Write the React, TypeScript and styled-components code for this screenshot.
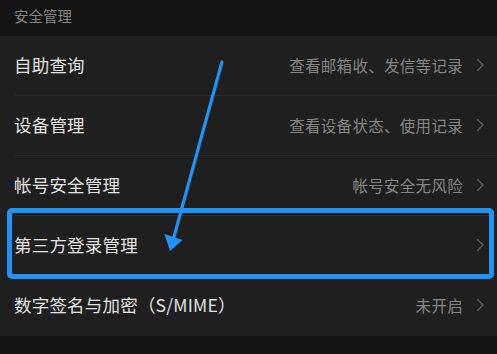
import React from "react";
import styled, { createGlobalStyle } from "styled-components";

interface IRow {
  title: string;
  detail?: string;
  highlighted?: boolean;
}

const rows: IRow[] = [
  { title: "自助查询", detail: "查看邮箱收、发信等记录" },
  { title: "设备管理", detail: "查看设备状态、使用记录" },
  { title: "帐号安全管理", detail: "帐号安全无风险" },
  { title: "第三方登录管理", highlighted: true },
  { title: "数字签名与加密（S/MIME）", detail: "未开启" },
];

const Chevron = () => (
  <svg width="9" height="14" viewBox="0 0 9 14">
    <path
      d="M1.5 1.5 L7 7 L1.5 12.5"
      fill="none"
      stroke="#5e5e5e"
      strokeWidth="1.4"
      strokeLinecap="round"
      strokeLinejoin="round"
    />
  </svg>
);

const PointerArrow = () => (
  <ArrowLayer width="497" height="354" viewBox="0 0 497 354">
    <line
      x1="222"
      y1="62"
      x2="172"
      y2="244"
      stroke="#1f93f3"
      strokeWidth="3.2"
      strokeLinecap="round"
    />
    <polygon points="170,251 164.5,234 182.5,240" fill="#1f93f3" />
  </ArrowLayer>
);

export default function App() {
  return (
    <>
      <GlobalStyle />
      <Screen>
        <SectionHeader>安全管理</SectionHeader>
        <List>
          {rows.map(({ title, detail, highlighted }) => (
            <Row key={title} highlighted={highlighted}>
              <Title>{title}</Title>
              <Right>
                {detail && <Detail>{detail}</Detail>}
                <Chevron />
              </Right>
            </Row>
          ))}
        </List>
        <Footer />
        <PointerArrow />
      </Screen>
    </>
  );
}

const GlobalStyle = createGlobalStyle`
  html, body {
    margin: 0;
    padding: 0;
    background: #141414;
  }
  body {
    font-family: "Noto Sans CJK SC", "Noto Sans", sans-serif;
  }
`;

const Screen = styled.div`
  position: relative;
  width: 497px;
  height: 354px;
  display: flex;
  flex-direction: column;
  overflow: hidden;
  background: #141414;
`;

const SectionHeader = styled.div`
  height: 36px;
  display: flex;
  align-items: center;
  padding: 0 0 6px 14px;
  box-sizing: border-box;
  font-size: 14.5px;
  color: #858585;
  background: #131313;
`;

const List = styled.div`
  display: flex;
  flex-direction: column;
  background: #1f1f1f;
`;

const Row = styled.div<{ highlighted?: boolean }>`
  position: relative;
  height: 60px;
  display: flex;
  align-items: center;
  justify-content: space-between;
  padding: 0 12px 3px 14px;
  box-sizing: border-box;

  &::before {
    content: "";
    position: absolute;
    left: 15px;
    right: 0;
    bottom: 0;
    height: 1px;
    background: #2b2b2b;
  }
  &:last-child::before {
    display: none;
  }

  ${({ highlighted }) =>
    highlighted &&
    `
    &::after {
      content: "";
      position: absolute;
      left: 7px;
      right: 3px;
      top: -8px;
      bottom: -3px;
      border: 5px solid #1f93f3;
      border-radius: 5px;
    }
  `}
`;

const Title = styled.div`
  font-size: 17.5px;
  color: #e2e2e2;
  letter-spacing: 0.2px;
`;

const Right = styled.div`
  display: flex;
  align-items: center;
  gap: 13px;
`;

const Detail = styled.div`
  font-size: 15.5px;
  color: #858585;
  letter-spacing: 0.3px;
`;

const Footer = styled.div`
  flex: 1;
  background: #141414;
`;

const ArrowLayer = styled.svg`
  position: absolute;
  left: 0;
  top: 0;
  pointer-events: none;
`;
